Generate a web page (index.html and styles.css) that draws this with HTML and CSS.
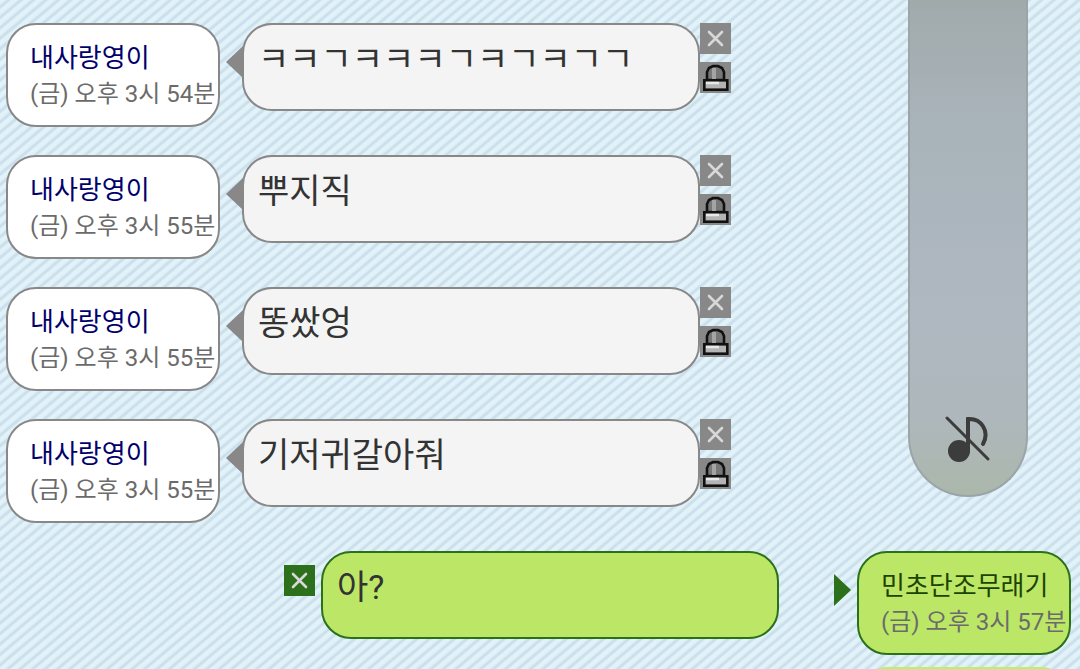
FILE: index.html
```
<!DOCTYPE html>
<html lang="ko">
<head>
    <meta charset="UTF-8"/>
    <meta name="viewport" content="width=device-width, initial-scale=1.0"/>
    <title>채팅</title>
    <link rel="stylesheet" href="styles.css">
</head>
<body>
    <svg class="sprite" width="0" height="0" aria-hidden="true">
        <symbol id="icon-close" viewBox="0 0 31 31">
            <path d="M9 9L22 22M22 9L9 22" fill="none" stroke="#d8d8d8" stroke-width="2.6" stroke-linecap="round"/>
        </symbol>
        <symbol id="icon-lock" viewBox="0 0 31 31">
            <path d="M7 18V10L9 6L13 4H18L22 6L24 10V18Z" fill="#777" stroke="#111" stroke-width="2.6"/>
            <path d="M14 6V17" stroke="#a4a4a4" stroke-width="4"/>
            <rect x="4.300" y="18.300" width="23" height="9.400" fill="#b4b4b4" stroke="#111" stroke-width="2.6"/>
            <path d="M6 21H19" stroke="#e8e8e8" stroke-width="2.500"/>
        </symbol>
    </svg>

    <main class="chat">
        <article class="row">
            <div class="sender">
                <div class="name">내사랑영이</div>
                <div class="time">(금) 오후 3시 54분</div>
            </div>
            <p class="bubble">ㅋㅋㄱㅋㅋㅋㄱㅋㄱㅋㄱㄱ</p>
            <div class="tools">
                <button class="tool" aria-label="삭제"><svg><use href="#icon-close"/></svg></button>
                <button class="tool" aria-label="잠금"><svg><use href="#icon-lock"/></svg></button>
            </div>
        </article>
        <article class="row">
            <div class="sender">
                <div class="name">내사랑영이</div>
                <div class="time">(금) 오후 3시 55분</div>
            </div>
            <p class="bubble">뿌지직</p>
            <div class="tools">
                <button class="tool" aria-label="삭제"><svg><use href="#icon-close"/></svg></button>
                <button class="tool" aria-label="잠금"><svg><use href="#icon-lock"/></svg></button>
            </div>
        </article>
        <article class="row">
            <div class="sender">
                <div class="name">내사랑영이</div>
                <div class="time">(금) 오후 3시 55분</div>
            </div>
            <p class="bubble">똥쌌엉</p>
            <div class="tools">
                <button class="tool" aria-label="삭제"><svg><use href="#icon-close"/></svg></button>
                <button class="tool" aria-label="잠금"><svg><use href="#icon-lock"/></svg></button>
            </div>
        </article>
        <article class="row">
            <div class="sender">
                <div class="name">내사랑영이</div>
                <div class="time">(금) 오후 3시 55분</div>
            </div>
            <p class="bubble">기저귀갈아줘</p>
            <div class="tools">
                <button class="tool" aria-label="삭제"><svg><use href="#icon-close"/></svg></button>
                <button class="tool" aria-label="잠금"><svg><use href="#icon-lock"/></svg></button>
            </div>
        </article>
        <article class="row mine">
            <button class="tool" aria-label="삭제"><svg><use href="#icon-close"/></svg></button>
            <p class="bubble">아?</p>
            <div class="sender">
                <div class="name">민초단조무래기</div>
                <div class="time">(금) 오후 3시 57분</div>
            </div>
        </article>
        <div class="more"></div>
    </main>

    <aside class="volume">
        <button class="mute" aria-label="음소거">
            <svg viewBox="0 0 48 52" fill="none" stroke="#3c3c3c" stroke-linecap="round">
                <circle cx="15" cy="37" r="11" fill="#3c3c3c" stroke="none"/>
                <path d="M24 37V5C37 4 46 17 39 30" stroke-width="4"/>
                <path d="M3 4L44 45" stroke-width="3"/>
            </svg>
        </button>
    </aside>
</body>
</html>
```

FILE: styles.css
```
* {
    box-sizing: border-box;
}
body {
    margin: 0;
    font-family: Roboto, "Noto Sans CJK KR", sans-serif;
    background: repeating-linear-gradient(140deg, #e2f3f9 0, #e0f1f8 3px, #cbdeec 5px, #cbdeec 6px, #e2f3f9 8px);
}
button {
    padding: 0;
    border: none;
    cursor: pointer;
}
svg {
    display: block;
    width: 100%;
    height: 100%;
}
.sprite {
    display: none;
}
.chat {
    display: flex;
    flex-direction: column;
    gap: 28px;
    height: 100vh;
    padding: 23px 9px 0 6px;
    overflow: hidden;
}
.row {
    display: flex;
    flex: none;
    align-items: flex-start;
}
.sender {
    flex: none;
    width: 214px;
    padding: 15px 0 13px 22px;
    border: 2px solid #888;
    border-radius: 30px;
    background-color: #fff;
    font-size: 26px;
    line-height: 36px;
    white-space: nowrap;
}
.name {
    color: #00006c;
}
.time {
    color: #6b6b6b;
    font-size: 24px;
}
.bubble {
    position: relative;
    width: 458px;
    min-height: 88px;
    margin: 0 0 0 22px;
    padding: 14px;
    border: 2px solid #888;
    border-radius: 30px;
    background-color: #f4f4f4;
    color: #333;
    font-size: 34px;
    line-height: 40px;
}
.bubble::before {
    content: "";
    position: absolute;
    top: 21px;
    left: -18px;
    width: 17px;
    height: 32px;
    background-color: #888;
    clip-path: polygon(0 50%, 100% 0, 100% 100%);
}
.tools {
    display: flex;
    flex-direction: column;
    gap: 8px;
}
.tool {
    flex: none;
    width: 31px;
    height: 31px;
    background-color: #888;
}
.mine {
    justify-content: flex-end;
}
.mine .sender,
.mine .bubble {
    border-color: #2c701c;
    background-color: #bce766;
}
.mine .name {
    color: #1c4400;
}
.mine .bubble {
    margin: 0 78px 0 6px;
}
.mine .bubble::before {
    left: auto;
    right: -74px;
    background-color: #2c701c;
    clip-path: polygon(0 0, 100% 50%, 0 100%);
}
.mine .tool {
    margin-top: 14px;
    background-color: #2c701c;
}
/* top of the next card */
.more {
    flex: none;
    align-self: flex-end;
    width: 214px;
    height: 104px;
    margin-top: -16px;
    border-radius: 30px;
    background-color: #b8f460;
}
.volume {
    position: fixed;
    top: 0;
    right: 52px;
    display: flex;
    flex-direction: column;
    justify-content: flex-end;
    align-items: center;
    width: 120px;
    height: 497px;
    padding-bottom: 29px;
    border: 2px solid #9ba5a8;
    border-top: none;
    border-radius: 0 0 60px 60px;
    background: linear-gradient(#a1aaab, #a9b3ba 25%, #afb8c0 65%, #aeb7bb 85%, #acb7ab);
}
.mute {
    width: 48px;
    height: 52px;
    background: none;
}
```
